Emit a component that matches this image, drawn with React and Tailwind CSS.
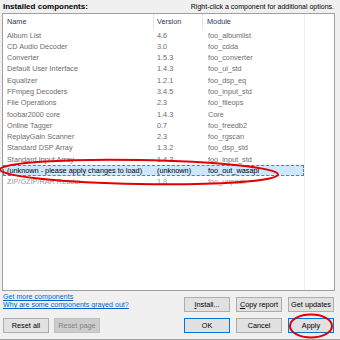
import React from "react";

const rows = [
  ["Album List", "4.6", "foo_albumlist"],
  ["CD Audio Decoder", "3.0", "foo_cdda"],
  ["Converter", "1.5.3", "foo_converter"],
  ["Default User Interface", "1.4.3", "foo_ui_std"],
  ["Equalizer", "1.2.1", "foo_dsp_eq"],
  ["FFmpeg Decoders", "3.4.5", "foo_input_std"],
  ["File Operations", "2.3", "foo_fileops"],
  ["foobar2000 core", "1.4.3", "Core"],
  ["Online Tagger", "0.7", "foo_freedb2"],
  ["ReplayGain Scanner", "2.3", "foo_rgscan"],
  ["Standard DSP Array", "1.3.2", "foo_dsp_std"],
  ["Standard Input Array", "1.4.3", "foo_input_std"],
  ["(unknown - please apply changes to load)", "(unknown)", "foo_out_wasapi", "sel"],
  ["ZIP/GZIP/RAR Reader", "1.8", "foo_unpack", "dim"],
];

const Btn = ({ children, variant }) => {
  const base = "w-[46px] h-[15px] flex items-center justify-center border text-[7.3px] leading-none";
  if (variant === "default")
    return <div className={base + " bg-[#e1e1e1] border-[#0078d7] text-black"}>{children}</div>;
  if (variant === "disabled")
    return <div className={base + " bg-[#cccccc] border-[#bfbfbf] text-[#838383]"}>{children}</div>;
  return <div className={base + " bg-[#e1e1e1] border-[#adadad] text-black"}>{children}</div>;
};

export default function App() {
  return (
    <div
      className="relative w-[340px] h-[340px] bg-[#f0f0f0] overflow-hidden border-b border-[#a0a0a0]"
      style={{ fontFamily: '"Liberation Sans", Arial, sans-serif' }}
    >
      {/* top line */}
      <div className="h-[13px] flex items-center justify-between pl-[3px] pr-[6px]">
        <span className="text-[8px] font-bold text-black leading-none">Installed components:</span>
        <span className="text-[7px] text-black leading-none">Right-click a component for additional options.</span>
      </div>

      {/* list */}
      <div className="ml-[2px] w-[333px] h-[278px] border border-[#a0a0a0] bg-white relative">
        <div className="absolute left-[301px] top-0 bottom-0 w-px bg-[#e8f0f8]" />
        <div className="h-[15.5px] flex items-center text-[7.3px] leading-none text-[#1e395b]">
          <div className="w-[151px] h-full flex items-center pl-[4px] border-r border-[#e5e5e5]">Name</div>
          <div className="w-[49px] h-full flex items-center pl-[3px] border-r border-[#e5e5e5]">Version</div>
          <div className="w-[101px] h-full flex items-center pl-[4px]">Module</div>
        </div>
        {rows.map(([name, ver, mod, kind]) => (
          <div
            key={name}
            className={
              "h-[11.3px] w-[301px] flex items-center text-[7.3px] leading-none " +
              (kind === "sel"
                ? "bg-[#cce8ff] border border-dashed border-[#6b7a8a] text-black"
                : kind === "dim"
                ? "text-[#9a9a9a] border border-transparent"
                : "text-[#6d6d6d] border border-transparent")
            }
          >
            <div className="w-[150px] pl-[3px] whitespace-nowrap">{name}</div>
            <div className="w-[50px] pl-[3px] whitespace-nowrap">{ver}</div>
            <div className="w-[99px] pl-[4px] whitespace-nowrap">{mod}</div>
          </div>
        ))}
      </div>

      {/* bottom */}
      <div className="flex justify-between items-start pl-[3px] pr-[6px]">
        <div className="flex flex-col pt-[2px] text-[7.1px] leading-[8px] text-[#0066cc] underline">
          <span>Get more components</span>
          <span>Why are some components grayed out?</span>
        </div>
        <div className="flex gap-[6px] pt-[6px]">
          <Btn><span className="underline">I</span>nstall...</Btn>
          <Btn><span className="underline">C</span>opy report</Btn>
          <Btn>Get updates</Btn>
        </div>
      </div>
      <div className="flex justify-between items-start pl-[3px] pr-[6px] mt-[6px]">
        <div className="flex gap-[5px]">
          <Btn>Reset all</Btn>
          <Btn variant="disabled">Reset page</Btn>
        </div>
        <div className="flex gap-[6px]">
          <Btn variant="default">OK</Btn>
          <Btn>Cancel</Btn>
          <Btn variant="default">Apply</Btn>
        </div>
      </div>

      {/* annotation ellipses */}
      <svg className="absolute left-0 top-0 pointer-events-none" width="340" height="340">
        <ellipse cx="139" cy="172" rx="139" ry="12" fill="none" stroke="#e00000" strokeWidth="2" transform="rotate(1 139 172)" />
        <ellipse cx="311" cy="326" rx="21" ry="11.5" fill="none" stroke="#e00000" strokeWidth="2" />
      </svg>
    </div>
  );
}
